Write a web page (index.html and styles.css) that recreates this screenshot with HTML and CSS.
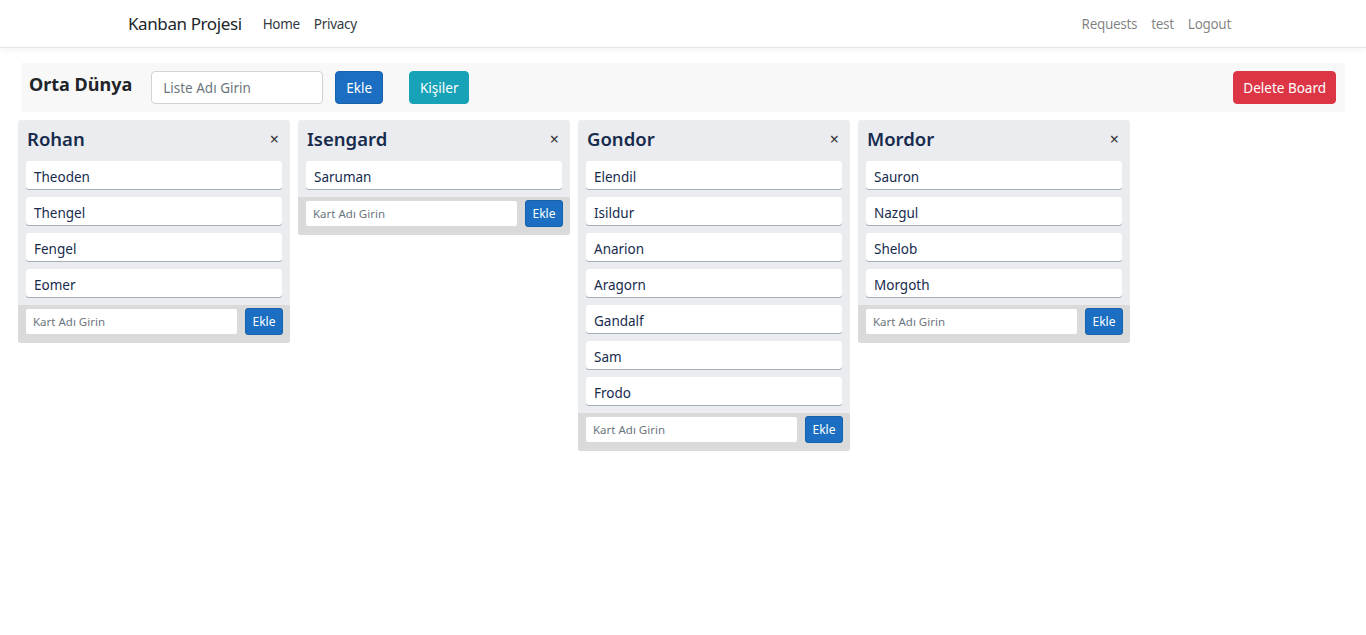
FILE: index.html
```html
<!DOCTYPE html>
<html lang="tr">
<head>
<meta charset="utf-8">
<title>Kanban Projesi</title>
<link rel="stylesheet" href="styles.css">
</head>
<body>
<header class="navbar">
  <div class="nav-container">
    <a class="brand" href="#">Kanban Projesi</a>
    <ul class="nav-left">
      <li><a class="nav-link dark" href="#">Home</a></li>
      <li><a class="nav-link dark" href="#">Privacy</a></li>
    </ul>
    <ul class="nav-right">
      <li><a class="nav-link" href="#">Requests</a></li>
      <li><a class="nav-link" href="#">test</a></li>
      <li><a class="nav-link" href="#">Logout</a></li>
    </ul>
  </div>
</header>

<main class="page">
  <div class="board-header">
    <h2 class="board-title">Orta Dünya</h2>
    <input class="list-input" type="text" placeholder="Liste Adı Girin">
    <button class="btn btn-primary">Ekle</button>
    <button class="btn btn-info">Kişiler</button>
    <button class="btn btn-danger">Delete Board</button>
  </div>

  <div class="lists">
    <section class="list">
      <div class="list-head"><h3 class="list-title">Rohan</h3><span class="close">×</span></div>
      <div class="cards">
        <div class="card">Theoden</div>
        <div class="card">Thengel</div>
        <div class="card">Fengel</div>
        <div class="card">Eomer</div>
      </div>
      <div class="list-foot"><input class="card-input" type="text" placeholder="Kart Adı Girin"><button class="btn-sm">Ekle</button></div>
    </section>
    <section class="list">
      <div class="list-head"><h3 class="list-title">Isengard</h3><span class="close">×</span></div>
      <div class="cards">
        <div class="card">Saruman</div>
      </div>
      <div class="list-foot"><input class="card-input" type="text" placeholder="Kart Adı Girin"><button class="btn-sm">Ekle</button></div>
    </section>
    <section class="list">
      <div class="list-head"><h3 class="list-title">Gondor</h3><span class="close">×</span></div>
      <div class="cards">
        <div class="card">Elendil</div>
        <div class="card">Isildur</div>
        <div class="card">Anarion</div>
        <div class="card">Aragorn</div>
        <div class="card">Gandalf</div>
        <div class="card">Sam</div>
        <div class="card">Frodo</div>
      </div>
      <div class="list-foot"><input class="card-input" type="text" placeholder="Kart Adı Girin"><button class="btn-sm">Ekle</button></div>
    </section>
    <section class="list">
      <div class="list-head"><h3 class="list-title">Mordor</h3><span class="close">×</span></div>
      <div class="cards">
        <div class="card">Sauron</div>
        <div class="card">Nazgul</div>
        <div class="card">Shelob</div>
        <div class="card">Morgoth</div>
      </div>
      <div class="list-foot"><input class="card-input" type="text" placeholder="Kart Adı Girin"><button class="btn-sm">Ekle</button></div>
    </section>
  </div>
</main>
</body>
</html>
```
FILE: styles.css
```css
* { box-sizing: border-box; }
html, body { margin: 0; padding: 0; }
body {
  font-family: "Noto Sans", "Open Sans", sans-serif;
  font-size: 14px;
  color: #212529;
  background: #fff;
}
a { text-decoration: none; }
ul { list-style: none; margin: 0; padding: 0; }

.navbar {
  height: 48px;
  border-bottom: 1px solid #e5e5e5;
  box-shadow: 0 2px 6px rgba(0,0,0,0.05);
  background: #fff;
}
.nav-container {
  width: 1140px;
  margin: 0 auto;
  padding: 0 15px;
  height: 47px;
  display: flex;
  align-items: center;
}
.brand {
  font-size: 17px;
  letter-spacing: -0.4px;
  color: #212529;
  margin-right: 14px;
}
.nav-left, .nav-right { display: flex; }
.nav-right { margin-left: auto; }
.nav-link {
  display: block;
  padding: 0 7px;
  font-size: 13.5px;
  letter-spacing: -0.3px;
  color: rgba(0,0,0,0.5);
}
.nav-link.dark { color: #343a40; }

.page { padding: 15px 0 0 0; }

.board-header {
  margin: 0 21px 0 21px;
  height: 49px;
  background: #f8f8f8;
  display: flex;
  align-items: center;
  padding: 0 9px 0 8px;
}
.board-title {
  margin: 0 19px 0 0;
  font-size: 18px;
  font-weight: 700;
  color: #212529;
  position: relative;
  top: -4px;
}
.list-input {
  width: 172px;
  height: 33px;
  border: 1px solid #ced4da;
  border-radius: 4px;
  padding: 0 11px;
  font-family: inherit;
  font-size: 13.5px;
  margin-right: 12px;
}
.list-input::placeholder { color: #6c757d; }
.btn {
  height: 33px;
  border: 1px solid transparent;
  border-radius: 4px;
  padding: 0 10px;
  font-family: inherit;
  font-size: 13.5px;
  color: #fff;
}
.btn-primary { background: #1b6ec2; border-color: #1861ac; margin-right: 26px; }
.btn-info { background: #17a2b8; border-color: #17a2b8; }
.btn-danger { background: #dc3545; border-color: #dc3545; margin-left: auto; padding: 0 9px; }

.lists {
  display: flex;
  align-items: flex-start;
  gap: 8px;
  padding: 8px 0 0 18px;
}
.list {
  width: 272px;
  background: #ebecf0;
  border-radius: 3px;
  overflow: hidden;
}
.list-head {
  height: 41px;
  display: flex;
  align-items: center;
  justify-content: space-between;
  padding: 0 11px 4px 9px;
}
.list-title {
  margin: 0;
  font-size: 18.5px;
  font-weight: 600;
  color: #172b4d;
}
.close {
  font-size: 16px;
  color: #333;
  line-height: 1;
}
.cards {
  display: flex;
  flex-direction: column;
  gap: 8px;
  padding: 0 8px 8px 8px;
}
.card {
  height: 28px;
  background: #fff;
  border-radius: 3px;
  box-shadow: 0 1px 0 rgba(9,30,66,0.3);
  padding: 3px 8px 0 8px;
  display: flex;
  align-items: center;
  font-size: 13.5px;
  color: #172b4d;
}
.list-foot {
  background: #dadada;
  height: 38px;
  display: flex;
  align-items: flex-start;
  padding: 4px 7px 0 8px;
  gap: 8px;
}
.card-input {
  width: 211px;
  height: 25px;
  border: none;
  border-radius: 2px;
  padding: 0 7px;
  font-family: inherit;
  font-size: 11.5px;
  background: #fff;
}
.card-input::placeholder { color: #6c757d; }
.btn-sm {
  width: 38px;
  height: 27px;
  margin-top: -1px;
  background: #1b6ec2;
  border: 1px solid #1861ac;
  border-radius: 3px;
  color: #fff;
  font-family: inherit;
  font-size: 12px;
  padding: 0;
}
```
